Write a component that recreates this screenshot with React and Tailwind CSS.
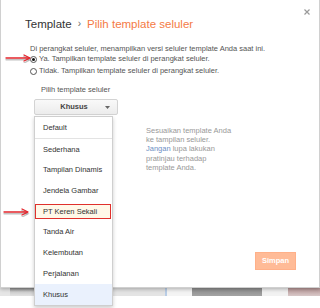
import { useState } from "react";

const templates = [
  "Sederhana",
  "Tampilan Dinamis",
  "Jendela Gambar",
  "PT Keren Sekali",
  "Tanda Air",
  "Kelembutan",
  "Perjalanan",
  "Khusus",
];

// red pointer arrow drawn over the dialog
const RedArrow = ({ className }) => (
  <svg className={className} width="28" height="9" viewBox="0 0 28 9" fill="none">
    <g stroke="#9a9a9a" strokeOpacity="0.6" strokeWidth="1.4" strokeLinecap="round">
      <path d="M1 5.8 H24" />
      <path d="M19 2.6 L25 5.8 L19 9" />
    </g>
    <g stroke="#e3242b" strokeWidth="1.3" strokeLinecap="round" strokeLinejoin="round">
      <path d="M1 4 H24" />
      <path d="M19 1 L25 4 L19 7" />
    </g>
  </svg>
);

const Radio = ({ checked }) => (
  <span className="flex items-center justify-center w-[7px] h-[7px] rounded-full border border-[#555] bg-white">
    {checked && <span className="w-[3px] h-[3px] rounded-full bg-[#111]" />}
  </span>
);

const App = () => {
  const [mode, setMode] = useState("ya");
  const [selected] = useState("Khusus");

  return (
    <div className="relative w-[320px] h-[308px] overflow-hidden bg-white font-['Liberation_Sans',Arial,sans-serif]">
      {/* ---------- page behind the dialog ---------- */}
      <div className="absolute left-0 top-[288px] w-full h-[8px] flex blur-[0.6px]">
        <div className="w-[10px] bg-[#e6e6e6]" />
        <div className="w-[100px] bg-gradient-to-b from-[#8a8a8a] via-[#cfcfcf] to-[#e2e2e2]" />
        <div className="w-[55px] bg-[#e4e4e4]" />
        <div className="w-[2px] bg-[#b9cde6]" />
        <div className="w-[25px] bg-[#f4f4f4]" />
        <div className="w-[70px] bg-gradient-to-b from-[#8c8c8c] to-[#a3a3a3]" />
        <div className="w-[26px] bg-[#f2f2f2]" />
        <div className="flex-1 bg-gradient-to-b from-[#b59494] to-[#d8c8c8]" />
      </div>

      {/* ---------- dialog ---------- */}
      <div className="relative z-10 h-[288px] flex flex-col bg-white border-x border-b border-[#d0d0d0] shadow-[0_1px_4px_rgba(0,0,0,0.3)] text-[7.5px] text-[#555]">
        <button className="absolute right-[9px] top-[9px] w-[6px] h-[6px]">
          <svg width="6" height="6" viewBox="0 0 6 6">
            <path d="M0.5 0.5 L5.5 5.5 M5.5 0.5 L0.5 5.5" stroke="#9a9a9a" strokeWidth="1.2" />
          </svg>
        </button>

        <div className="mt-[17px] ml-[24px] flex items-center text-[11.5px] leading-[14px]">
          <span className="text-[#333]">Template</span>
          <span className="mx-[6px] text-[10px] text-[#666]">›</span>
          <span className="text-[#f47a45]">Pilih template seluler</span>
        </div>

        <p className="mt-[13px] ml-[29px] h-[10px] leading-[10px]">
          Di perangkat seluler, menampilkan versi seluler template Anda saat ini.
        </p>
        <label
          className="ml-[29px] h-[10px] flex items-center gap-[2px] leading-[10px] cursor-pointer"
          onClick={() => setMode("ya")}
        >
          <Radio checked={mode === "ya"} />
          <span>Ya. Tampilkan template seluler di perangkat seluler.</span>
        </label>
        <label
          className="mt-[2px] ml-[29px] h-[10px] flex items-center gap-[2px] leading-[10px] cursor-pointer"
          onClick={() => setMode("tidak")}
        >
          <Radio checked={mode === "tidak"} />
          <span>Tidak. Tampilkan template seluler di perangkat seluler.</span>
        </label>

        <p className="mt-[9px] ml-[40px] h-[10px] leading-[10px]">Pilih template seluler</p>

        <button className="mt-[4px] ml-[33px] w-[84px] h-[16px] flex items-center rounded-[2px] border border-[#d3d3d3] bg-gradient-to-b from-[#f9f9f9] to-[#ececec]">
          <span className="flex-1 pl-[16px] text-center font-bold text-[#444]">{selected}</span>
          <span className="w-[20px] flex justify-center">
            <svg width="5" height="3" viewBox="0 0 5 3">
              <path d="M0 0 H5 L2.5 3 Z" fill="#666" />
            </svg>
          </span>
        </button>

        <div className="mt-[11px] ml-[145px] leading-[9.2px] text-[#999]">
          <p>Sesuaikan template Anda</p>
          <p>ke tampilan seluler.</p>
          <p>
            <span className="text-[#6d8fc4]">Jangan</span> lupa lakukan
          </p>
          <p>pratinjau terhadap</p>
          <p>template Anda.</p>
        </div>

        <button className="mt-auto mb-[17px] mr-[23px] self-end w-[41px] h-[18px] border border-[#ffb089] bg-[#ffbb97] text-white font-bold">
          Simpan
        </button>
      </div>

      {/* ---------- dropdown menu ---------- */}
      <div className="absolute z-20 left-[34px] top-[116px] w-[79px] bg-white border border-[#cfcfcf] shadow-[0_2px_4px_rgba(0,0,0,0.2)] text-[7.5px] text-[#333]">
        <div className="h-[21px] flex items-center pl-[8px]">Default</div>
        <div className="h-px bg-[#e3e3e3]" />
        {templates.map((name) =>
          name === "PT Keren Sekali" ? (
            <div key={name} className="h-[20.7px] flex items-stretch py-[3px] pr-[1px]">
              <div className="flex-1 flex items-center pl-[7px] border border-[#e0302c] bg-[#fff8e8]">
                {name}
              </div>
            </div>
          ) : (
            <div
              key={name}
              className={`h-[20.7px] flex items-center pl-[8px] ${
                name === selected ? "bg-[#eaf1fd]" : ""
              }`}
            >
              {name}
            </div>
          )
        )}
      </div>

      {/* ---------- pointer arrows ---------- */}
      <RedArrow className="absolute z-30 left-[5px] top-[54px]" />
      <RedArrow className="absolute z-30 left-[3px] top-[208px]" />
    </div>
  );
};

export default App;
